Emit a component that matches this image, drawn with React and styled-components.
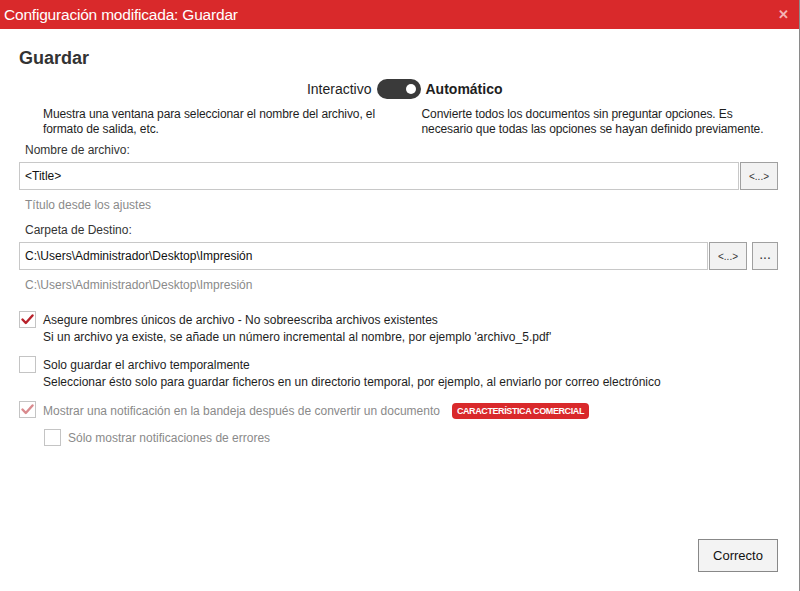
import React from 'react'
import styled, { createGlobalStyle } from 'styled-components';

const GlobalStyle = createGlobalStyle`
html, body {
    margin: 0;
    padding: 0;
    background: #ffffff;
}
body {
    font-family: "Liberation Sans", Arial, sans-serif;
    color: #1e1e1e;
}
`;

const Check = ({ faded }) => (
    <svg width="13" height="11" viewBox="0 0 13 11">
        <path d="M1.5 5.5 L4.8 9 L11.5 1.5" fill="none" stroke={faded ? '#d98a8e' : '#b8222b'} strokeWidth="2.4" strokeLinecap="round" strokeLinejoin="round" />
    </svg>
)

const Option = ({ checked, faded, title, note, badge, indent }) => (
    <OptionRow indent={indent}>
        <Box>{checked && <Check faded={faded} />}</Box>
        <OptionText>
            <OptionTitle faded={faded}>
                {title}
                {badge && <Badge>{badge}</Badge>}
            </OptionTitle>
            {note && <OptionNote>{note}</OptionNote>}
        </OptionText>
    </OptionRow>
)

const App = () => {

    return (
        <Window>
            <GlobalStyle />
            <TitleBar>
                <WindowTitle>Configuración modificada: Guardar</WindowTitle>
                <CloseButton>✕</CloseButton>
            </TitleBar>

            <Content>
                <Heading>Guardar</Heading>

                <ModeRow>
                    <ModeLabel>Interactivo</ModeLabel>
                    <Toggle><Knob /></Toggle>
                    <ModeLabel active>Automático</ModeLabel>
                </ModeRow>

                <DescRow>
                    <Desc>Muestra una ventana para seleccionar el nombre del archivo, el formato de salida, etc.</Desc>
                    <Desc>Convierte todos los documentos sin preguntar opciones. Es necesario que todas las opciones se hayan definido previamente.</Desc>
                </DescRow>

                <FieldLabel>Nombre de archivo:</FieldLabel>
                <InputRow>
                    <TextInput>&lt;Title&gt;</TextInput>
                    <SmallButton>&lt;...&gt;</SmallButton>
                </InputRow>
                <Hint>Título desde los ajustes</Hint>

                <FieldLabel>Carpeta de Destino:</FieldLabel>
                <InputRow>
                    <TextInput>C:\Users\Administrador\Desktop\Impresión</TextInput>
                    <SmallButton>&lt;...&gt;</SmallButton>
                    <SmallButton narrow>...</SmallButton>
                </InputRow>
                <Hint>C:\Users\Administrador\Desktop\Impresión</Hint>

                <Options>
                    <Option checked title="Asegure nombres únicos de archivo - No sobreescriba archivos existentes"
                        note="Si un archivo ya existe, se añade un número incremental al nombre, por ejemplo 'archivo_5.pdf'" />
                    <Option title="Solo guardar el archivo temporalmente"
                        note="Seleccionar ésto solo para guardar ficheros en un directorio temporal, por ejemplo, al enviarlo por correo electrónico" />
                    <Option checked faded title="Mostrar una notificación en la bandeja después de convertir un documento"
                        badge="CARACTERÍSTICA COMERCIAL" />
                    <Option faded indent title="Sólo mostrar notificaciones de errores" />
                </Options>
            </Content>

            <Footer>
                <OkButton>Correcto</OkButton>
            </Footer>
        </Window>
    )
}

export default App;

const Window = styled.div`
width: 800px;
height: 591px;
display: flex;
flex-direction: column;
box-sizing: border-box;
border-right: 1px solid #8a8a8a;
overflow: hidden;
`;

const TitleBar = styled.div`
height: 29px;
background-color: #d9292b;
display: flex;
align-items: center;
justify-content: space-between;
padding: 0 10px 0 4px;
flex-shrink: 0;
`;

const WindowTitle = styled.div`
color: #ffffff;
font-size: 15.5px;
letter-spacing: -0.2px;
`;

const CloseButton = styled.div`
color: #f4b3b5;
font-size: 13px;
font-weight: bold;
`;

const Content = styled.div`
padding: 0 21px 0 19px;
display: flex;
flex-direction: column;
`;

const Heading = styled.h1`
margin: 18px 0 0 0;
font-size: 18px;
font-weight: bold;
color: #333333;
line-height: 22px;
`;

const ModeRow = styled.div`
display: grid;
grid-template-columns: 1fr auto 1fr;
align-items: center;
gap: 5px;
margin-top: 10px;
height: 20px;
`;

const ModeLabel = styled.div`
font-size: 14px;
font-weight: ${p => p.active ? 'bold' : 'normal'};
text-align: ${p => p.active ? 'left' : 'right'};
color: #1e1e1e;
`;

const Toggle = styled.div`
width: 44px;
height: 20px;
border-radius: 10px;
background: #3a3a3a;
position: relative;
`;

const Knob = styled.div`
position: absolute;
right: 5px;
top: 5px;
width: 10px;
height: 10px;
border-radius: 50%;
background: #ffffff;
`;

const DescRow = styled.div`
display: grid;
grid-template-columns: 1fr 1fr;
column-gap: 22px;
padding-left: 24px;
margin-top: 8px;
`;

const Desc = styled.div`
font-size: 12px;
line-height: 15px;
letter-spacing: -0.1px;
color: #1e1e1e;
max-width: 360px;
`;

const FieldLabel = styled.div`
font-size: 12px;
line-height: 15px;
color: #333333;
padding-left: 6px;
margin-top: 6px;
`;

const InputRow = styled.div`
display: flex;
margin-top: 4px;
height: 28px;
`;

const TextInput = styled.div`
flex: 1;
border: 1px solid #c8c8c8;
display: flex;
align-items: center;
padding-left: 5px;
font-size: 12px;
color: #111111;
`;

const SmallButton = styled.div`
width: ${p => p.narrow ? '26px' : '38px'};
margin-left: ${p => p.narrow ? '5px' : '1px'};
border: 1px solid #a0a0a0;
background: #f2f2f2;
display: flex;
align-items: center;
justify-content: center;
font-size: ${p => p.narrow ? '14px' : '10px'};
padding-bottom: ${p => p.narrow ? '4px' : '0'};
box-sizing: border-box;
color: #333333;
`;

const Hint = styled.div`
font-size: 12px;
line-height: 15px;
color: #8a8a8a;
padding-left: 6px;
margin-top: 8px;
margin-bottom: 4px;
`;

const Options = styled.div`
display: flex;
flex-direction: column;
gap: 11px;
margin-top: 14px;
`;

const OptionRow = styled.div`
display: flex;
gap: 7px;
padding-left: ${p => p.indent ? '25px' : '0'};
margin-top: ${p => p.indent ? '-1px' : '0'};
`;

const Box = styled.div`
width: 15px;
height: 15px;
border: 1px solid #c4c4c4;
background: #ffffff;
display: flex;
align-items: center;
justify-content: center;
flex-shrink: 0;
`;

const OptionText = styled.div`
display: flex;
flex-direction: column;
padding-top: 2px;
`;

const OptionTitle = styled.div`
font-size: 12px;
line-height: 15px;
color: ${p => p.faded ? '#8a8a8a' : '#1e1e1e'};
display: flex;
align-items: center;
gap: 12px;
`;

const OptionNote = styled.div`
font-size: 12px;
line-height: 15px;
color: #1e1e1e;
margin-top: 2px;
`;

const Badge = styled.span`
background: #d9292b;
color: #ffffff;
font-size: 9px;
font-weight: bold;
letter-spacing: -0.4px;
border-radius: 4px;
padding: 3px 5px;
line-height: 10px;
`;

const Footer = styled.div`
margin-top: auto;
display: flex;
justify-content: flex-end;
padding: 0 21px 19px 0;
`;

const OkButton = styled.button`
width: 80px;
height: 33px;
border: 1px solid #888888;
background: #f3f3f3;
font-family: "Liberation Sans", Arial, sans-serif;
font-size: 13px;
color: #111111;
`;
